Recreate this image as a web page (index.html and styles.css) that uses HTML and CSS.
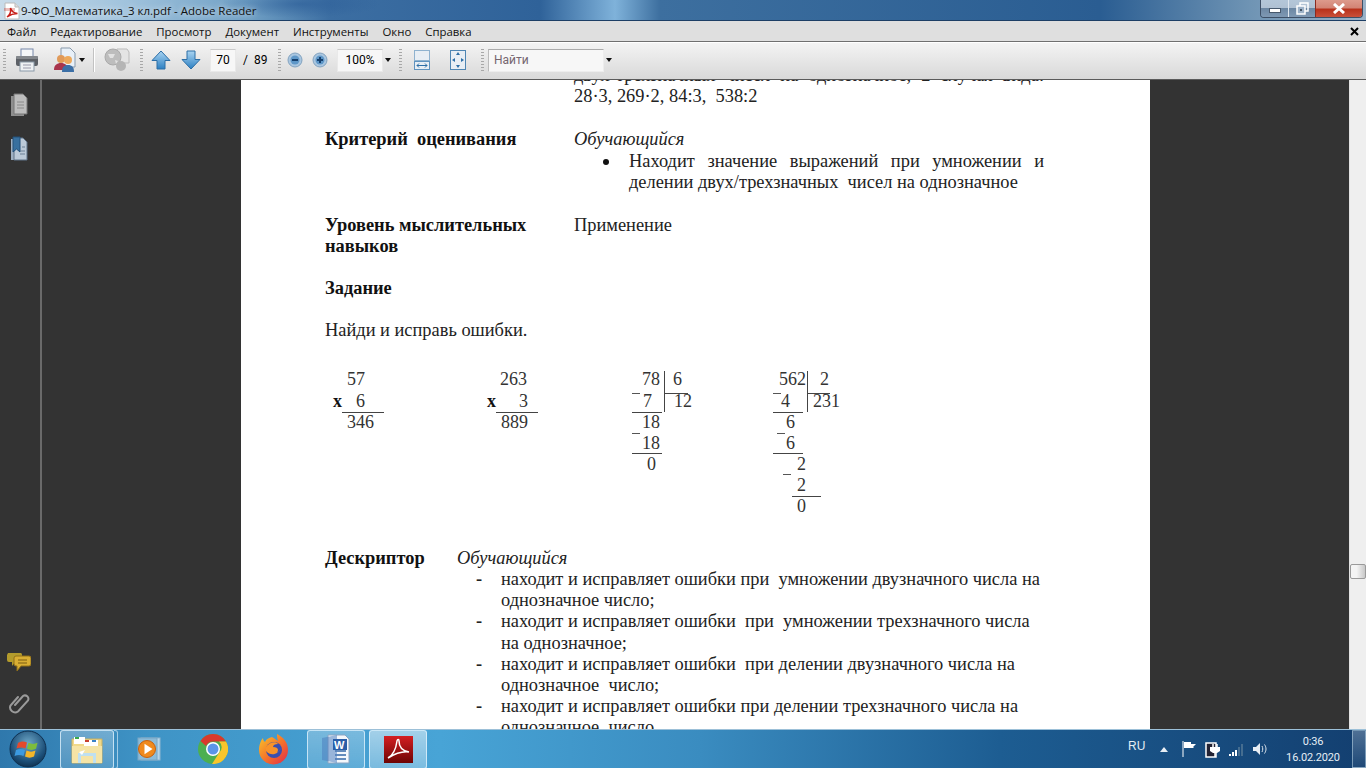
FILE: index.html
```html
<!DOCTYPE html>
<html lang="ru">
<head>
<meta charset="utf-8">
<title>9-ФО_Математика_3 кл.pdf - Adobe Reader</title>
<link rel="stylesheet" href="styles.css">
</head>
<body>
<div class="app">
  <header class="titlebar">
    <svg class="pdf-mini" viewBox="0 0 16 18" width="16" height="18"><path d="M1 1h10l4 4v12H1z" fill="#fff" stroke="#bbb"/><path d="M11 1v4h4" fill="#ddd" stroke="#bbb"/><rect x="0" y="6" width="11" height="3" fill="#c8281e" opacity=".3"/><path d="M3 15c3-2 4-6 3.500-9 1 3 3 5 7 5.500-4 0-7 1-10.500 3.500z" fill="none" stroke="#c8201a" stroke-width="1.500"/></svg>
    <span class="title-text">9-ФО_Математика_3 кл.pdf - Adobe Reader</span>
    <div class="caption">
      <div class="cap cap-min"><span class="min-glyph"></span></div>
      <div class="cap cap-max"><svg viewBox="0 0 13 13" width="13" height="13"><rect x="4" y="1" width="8" height="8" fill="none" stroke="#fff" stroke-width="1.500"/><rect x="1" y="4" width="8" height="8" fill="#9db2c8" stroke="#fff" stroke-width="1.500"/><rect x="4" y="7" width="2" height="2" fill="#456"/></svg></div>
      <div class="cap cap-close"><svg viewBox="0 0 14 11" width="14" height="11"><path d="M2 1l10 9M12 1L2 10" stroke="#fff" stroke-width="3"/></svg></div>
    </div>
  </header>
  <nav class="menubar">
    <span>Файл</span><span>Редактирование</span><span>Просмотр</span><span>Документ</span><span>Инструменты</span><span>Окно</span><span>Справка</span>
    <svg class="menu-x" viewBox="0 0 9 9" width="9" height="9"><path d="M1 1l7 7M8 1L1 8" stroke="#000" stroke-width="2"/></svg>
  </nav>
  <div class="toolbar">
    <i class="grip"></i>
    <svg class="ti ti-print" viewBox="0 0 24 24" width="24" height="24"><rect x="6" y="1" width="12" height="8" fill="#f4f6f8" stroke="#78a"/><rect x="1" y="8" width="22" height="10" rx="2" fill="#5c6066"/><rect x="1" y="8" width="22" height="3" rx="1" fill="#83878c"/><rect x="5" y="14" width="14" height="9" fill="#eef1f3" stroke="#8a99a8"/><path d="M8 17h8M8 20h8" stroke="#99a"/></svg>
    <svg class="ti ti-share" viewBox="0 0 24 26" width="24" height="26"><path d="M9 1h9l5 5v14H9z" fill="#e8f0f8" stroke="#89a"/><circle cx="9" cy="12" r="4" fill="#e09a5a"/><path d="M2 23c0-5 3-7 7-7s7 2 7 7z" fill="#a8344c"/><circle cx="16" cy="13" r="4" fill="#eda95c"/><path d="M10 25c0-5 2-7 6-7s6 2 6 7z" fill="#3b6fa6"/></svg>
    <i class="caret c-share"></i>
    <i class="sep"></i>
    <svg class="ti ti-gray" viewBox="0 0 28 26" width="28" height="26"><path d="M14 2h10l2 3v11H14z" fill="#e4e4e4" stroke="#bbb"/><circle cx="10" cy="10" r="8" fill="#bdbdbd" stroke="#aaa"/><path d="M5 7h7l-2 4H7zM12 13l3 1-2 3z" fill="#e2e2e2"/><circle cx="18" cy="19" r="5" fill="#b5b5b5"/></svg>
    <i class="grip g-nav"></i>
    <svg class="ti ti-up" viewBox="0 0 20 20" width="20" height="20"><defs><linearGradient id="gb" x1="0" y1="0" x2="0" y2="1"><stop offset="0" stop-color="#a9d4f2"/><stop offset="1" stop-color="#2d80c2"/></linearGradient></defs><path d="M10 1l9 9.500h-5V19H6v-8.500H1z" fill="url(#gb)" stroke="#2c6ea6"/></svg>
    <svg class="ti ti-down" viewBox="0 0 20 20" width="20" height="20"><path d="M10 19l9-9.500h-5V1H6v8.500H1z" fill="url(#gb)" stroke="#2c6ea6"/></svg>
    <div class="field f-page">70</div>
    <span class="pg">/&nbsp; 89</span>
    <i class="grip g-zoom"></i>
    <svg class="ti ti-zo" viewBox="0 0 16 16" width="16" height="16"><circle cx="8" cy="8" r="7" fill="#a9c6e0" stroke="#83a3c0"/><circle cx="8" cy="8" r="4.500" fill="#5e97c8"/><path d="M5 8h6" stroke="#16406e" stroke-width="2"/></svg>
    <svg class="ti ti-zi" viewBox="0 0 16 16" width="16" height="16"><circle cx="8" cy="8" r="7" fill="#a9c6e0" stroke="#83a3c0"/><circle cx="8" cy="8" r="4.500" fill="#5e97c8"/><path d="M5 8h6M8 5v6" stroke="#16406e" stroke-width="2"/></svg>
    <div class="field f-zoom">100%</div>
    <i class="caret c-zoom"></i>
    <i class="grip g-fit"></i>
    <svg class="ti ti-fitw" viewBox="0 0 16 20" width="16" height="20"><rect x=".5" y=".5" width="15" height="10" fill="#e8eef4" stroke="#8fb2cf"/><rect x=".5" y="11.500" width="15" height="8" fill="#e8eef4" stroke="#5f93bf"/><path d="M3 15.500h10M3 15.500l2-2M3 15.500l2 2M13 15.500l-2-2M13 15.500l-2 2" stroke="#2c6ea6" fill="none"/></svg>
    <svg class="ti ti-fitp" viewBox="0 0 16 20" width="16" height="20"><rect x=".5" y=".5" width="15" height="19" fill="#e8eef4" stroke="#4f86b3"/><path d="M8 2l2 3H6zM8 18l2-3H6zM2 10l3-2v4zM14 10l-3-2v4z" fill="#2c6ea6"/></svg>
    <i class="grip g-find"></i>
    <div class="field f-find">Найти</div>
    <i class="caret c-find"></i>
  </div>
  <main class="workspace">
    <aside class="sidepanel">
      <div class="side-top">
        <svg viewBox="0 0 18 24" width="18" height="24"><rect x="1" y="3" width="13" height="20" fill="#8e8e8e"/><path d="M4 1h9l4 4v16H4z" fill="#bdbdbd" stroke="#777"/><path d="M7 9h7M7 12h7M7 15h7" stroke="#8a8a8a"/></svg>
        <svg viewBox="0 0 18 26" width="18" height="26"><rect x="1" y="3" width="13" height="21" fill="#9fb0c2"/><path d="M4 2h9l4 4v18H4z" fill="#bccad8" stroke="#5f7287"/><path d="M3 1h7v15l-3.500-3L3 16z" fill="#38709f" stroke="#23507a"/><path d="M12 11h3M10 15h5M10 18h5" stroke="#6d8196"/></svg>
      </div>
      <div class="side-bottom">
        <svg viewBox="0 0 24 20" width="24" height="20"><path d="M1 1h13a2 2 0 0 1 1 2v5a2 2 0 0 1-2 2H8l-3 4v-4H2a2 2 0 0 1-2-2V3z" fill="#b39b2c"/><path d="M9 4h13a2 2 0 0 1 2 2v6a2 2 0 0 1-2 2h-8l-4 5v-5H9a2 2 0 0 1-2-2V6a2 2 0 0 1 2-2z" fill="#d9ae33" stroke="#8f6f18"/><path d="M11 8h9M11 11h9" stroke="#7a5d12"/></svg>
        <svg viewBox="0 0 22 24" width="22" height="24"><path d="M7 13l8-9a3.500 3.500 0 0 1 5 4.500l-10 11a5 5 0 0 1-7.500-6L10 5" fill="none" stroke="#9a9a9a" stroke-width="2" stroke-linecap="round"/></svg>
      </div>
    </aside>
    <div class="canvas">
      <article class="page">
        <div class="doc">
          <div class="row r-intro">
            <div></div>
            <div>
              <p class="just">двух-трехзначных чисел на однозначное, 2 случая вида:</p>
              <p>28·3, 269·2, 84:3, &nbsp;538:2</p>
            </div>
          </div>
          <div class="row r-crit">
            <b>Критерий&nbsp; оценивания</b>
            <div>
              <p><em>Обучающийся</em></p>
              <ul class="bullets">
                <li>Находит значение выражений при умножении и делении двух/трехзначных&nbsp; чисел на однозначное</li>
              </ul>
            </div>
          </div>
          <div class="row r-level">
            <b>Уровень мыслительных<br>навыков</b>
            <p>Применение</p>
          </div>
          <p class="block r-task"><b>Задание</b></p>
          <p class="block r-find">Найди и исправь ошибки.</p>
          <svg class="math" width="719" height="180" viewBox="0 0 719 180">
            <text x="22" y="17">57</text>
            <text class="bold" x="8" y="39">x</text>
            <text x="31" y="39">6</text>
            <line x1="17" y1="44" x2="59" y2="44"/>
            <text x="22" y="60">346</text>

            <text x="175" y="17">263</text>
            <text class="bold" x="162" y="39">x</text>
            <text x="194" y="39">3</text>
            <line x1="171" y1="44" x2="213" y2="44"/>
            <text x="176" y="60">889</text>

            <text x="317" y="17">78</text>
            <text x="348" y="17">6</text>
            <line x1="339" y1="3" x2="339" y2="44"/>
            <line x1="339" y1="25" x2="363" y2="25"/>
            <line class="minus" x1="307" y1="25" x2="315" y2="25"/>
            <text x="318" y="39">7</text>
            <text x="349" y="39">12</text>
            <line x1="307" y1="44" x2="337" y2="44"/>
            <text x="317" y="60">18</text>
            <line class="minus" x1="307" y1="65" x2="315" y2="65"/>
            <text x="317" y="81">18</text>
            <line x1="307" y1="85" x2="337" y2="85"/>
            <text x="322" y="102">0</text>

            <text x="454" y="17">562</text>
            <text x="495" y="17">2</text>
            <line x1="482" y1="3" x2="482" y2="44"/>
            <line x1="482" y1="25" x2="505" y2="25"/>
            <line class="minus" x1="448" y1="25" x2="456" y2="25"/>
            <text x="456" y="39">4</text>
            <text x="488" y="39">231</text>
            <line x1="448" y1="44" x2="478" y2="44"/>
            <text x="461" y="60">6</text>
            <line class="minus" x1="452" y1="65" x2="460" y2="65"/>
            <text x="461" y="81">6</text>
            <line x1="448" y1="85" x2="478" y2="85"/>
            <text x="472" y="102">2</text>
            <line class="minus" x1="458" y1="106" x2="466" y2="106"/>
            <text x="472" y="123">2</text>
            <line x1="467" y1="128" x2="496" y2="128"/>
            <text x="472" y="144">0</text>
          </svg>
          <div class="descr">
            <b>Дескриптор</b>
            <p><em>Обучающийся</em></p>
          </div>
          <ul class="dashes">
            <li>находит и исправляет ошибки при&nbsp; умножении двузначного числа на однозначное число;</li>
            <li>находит и исправляет ошибки&nbsp; при&nbsp; умножении трехзначного числа на однозначное;</li>
            <li>находит и исправляет ошибки&nbsp; при делении двузначного числа на однозначное&nbsp; число;</li>
            <li>находит и исправляет ошибки при делении трехзначного числа на однозначное&nbsp; число.</li>
          </ul>
        </div>
      </article>
      <div class="scrollbar"><div class="thumb"></div></div>
    </div>
  </main>
  <footer class="taskbar">
    <div class="start"><svg viewBox="0 0 38 38" width="38" height="38"><defs><radialGradient id="orb" cx=".5" cy=".35" r=".7"><stop offset="0" stop-color="#6fa8c8"/><stop offset=".7" stop-color="#1c4f78"/><stop offset="1" stop-color="#0c2c48"/></radialGradient></defs><circle cx="19" cy="19" r="18" fill="url(#orb)" stroke="#0f3050"/><path d="M9 13c3-2 6-2 9-.5l-1.500 6c-3-1.500-6-1.500-9 0z" fill="#e5492c"/><path d="M19.500 12.800c3 1.500 6 1.500 9 0l-1.500 6c-3 1.500-6 1.500-9 0z" fill="#7dbd3c"/><path d="M7 20c3-1.500 6-1.500 9 0l-1.500 6c-3-1.500-6-1.500-9 0z" fill="#3c9ae0"/><path d="M17.500 20.500c3 1.500 6 1.500 9 0l-1.500 6c-3 1.500-6 1.500-9 0z" fill="#f5b62a"/></svg></div>
    <div class="task active t-ex"><svg viewBox="0 0 32 30" width="32" height="30"><path d="M1 5h30v24H1z" fill="#f0d98a" stroke="#c9b060"/><rect x="3" y="3" width="11" height="7" fill="#fff"/><rect x="4" y="3" width="4" height="2" fill="#3aa84a"/><rect x="13" y="6" width="14" height="6" fill="#fff"/><rect x="14" y="6" width="4" height="2" fill="#c8402e"/><rect x="21" y="6" width="4" height="2" fill="#3a82c8"/><path d="M1 12h30v17H1z" fill="#f5e4a6"/><path d="M7 19h18v10h-3v-7H10v7H7z" fill="#bfe0f0"/><path d="M8 18l6-2-3 5z" fill="#fff"/></svg></div>
    <i class="ex-edge"></i>
    <div class="task t-wmp"><svg viewBox="0 0 26 26" width="26" height="26"><rect x="6" y="2" width="19" height="22" fill="#b7d6ea" stroke="#8fb6d0"/><rect x="3" y="2" width="19" height="22" fill="#8cbbd8" stroke="#79a6c4"/><circle cx="12" cy="13" r="8.500" fill="#f08a1d" stroke="#c8610c"/><path d="M9.500 7.800l8 5.200-8 5.200z" fill="#fff"/></svg></div>
    <div class="task t-chrome"><svg viewBox="0 0 30 30" width="30" height="30"><circle cx="15" cy="15" r="15" fill="#4caf50"/><path d="M15 0a15 15 0 0 1 13 7.500H15a7.500 7.500 0 0 0-7 4.500L2.500 7A15 15 0 0 1 15 0z" fill="#d8392c"/><path d="M28 7.500A15 15 0 0 1 14 30l7-11a7.500 7.500 0 0 0 0-11.500z" fill="#f8c52c"/><circle cx="15" cy="15" r="7" fill="#fff"/><circle cx="15" cy="15" r="5.500" fill="#5a95e8"/></svg></div>
    <div class="task t-ff"><svg viewBox="0 0 30 32" width="30" height="32"><defs><linearGradient id="ffg" x1="0" y1="0" x2="1" y2="1"><stop offset="0" stop-color="#f9c92a"/><stop offset=".5" stop-color="#f5762a"/><stop offset="1" stop-color="#e0284c"/></linearGradient></defs><path d="M18 1c6 3 11 8 11 16a14.500 14.500 0 0 1-29 0C0 12 2 7 4 5c0 2 1 3 2 4 1-3 4-4 7-5 2 1 6 4 6 4-1-3-1-5-1-7z" fill="url(#ffg)"/><circle cx="15" cy="17" r="8" fill="#3a4fb0"/><path d="M7 14c3-5 10-6 12-3-3 0-5 1-5 3 3 0 5 1 5 3 0 3-4 5-7 3 3 1 8 0 10-5-2 6-10 9-15 3z" fill="#f8932a"/></svg></div>
    <div class="task active t-word"><svg viewBox="0 0 30 30" width="30" height="30"><path d="M7 1h17l4 4v24H7z" fill="#f4f7fb" stroke="#8ba4c2"/><path d="M14 9h11M14 13h11M14 17h11M14 21h11M14 25h11" stroke="#3568a8" stroke-width="1.500"/><path d="M1 4l15-3v28L1 26z" fill="#4f7fc0" opacity=".55"/><rect x="12" y="5" width="14" height="11" fill="#2a5ea8"/><text class="w-letter" x="13" y="15">W</text></svg></div>
    <div class="task active t-pdf"><svg viewBox="0 0 29 27" width="29" height="27"><defs><linearGradient id="pdfg" x1="0" y1="0" x2="0" y2="1"><stop offset="0" stop-color="#d41f22"/><stop offset="1" stop-color="#6d0404"/></linearGradient></defs><rect width="29" height="27" fill="url(#pdfg)"/><path d="M4 22c5-3 8-9 9-17 .5-2 2-2 2 0 0 6 4 10 10 11-7-1-13 1-21 6z" fill="none" stroke="#fff" stroke-width="1.500"/></svg></div>
    <div class="tray">
      <span class="lang">RU</span>
      <svg class="tr-up" viewBox="0 0 8 5" width="8" height="5"><path d="M4 0l4 5H0z" fill="#e8eef4"/></svg>
      <svg class="tr-flag" viewBox="0 0 16 18" width="16" height="18"><path d="M2 1v16" stroke="#fff"/><path d="M3 2h7v2h5l-3 3 1 1H3z" fill="#fff"/></svg>
      <svg class="tr-pow" viewBox="0 0 16 17" width="16" height="17"><rect x="1" y="2" width="10" height="14" fill="#223" stroke="#fff" stroke-width="1.500"/><path d="M5 6h10v4l-3 2H8L5 10z" fill="#fff"/><path d="M8 3v3M12 3v3M10 12v4" stroke="#fff" stroke-width="1.500"/></svg>
      <svg class="tr-net" viewBox="0 0 16 15" width="16" height="15"><path d="M1 12h2v2H1z" fill="#fff"/><path d="M4 10h2v4H4zM7 8h2v6H7z" fill="#fff"/><path d="M10 5h2v9h-2zM13 2h2v12h-2z" fill="#456d90"/></svg>
      <svg class="tr-vol" viewBox="0 0 16 14" width="16" height="14"><path d="M1 5h3l4-4v12L4 9H1z" fill="#e8eef4"/><path d="M10 4c1 2 1 4 0 6M12.500 2.500c2 3 2 6 0 9" stroke="#dde6ee" fill="none"/></svg>
      <div class="clock"><div>0:36</div><div>16.02.2020</div></div>
      <div class="showdesk"></div>
    </div>
  </footer>
</div>
</body>
</html>
```
FILE: styles.css
```css
* { box-sizing: border-box; }
html, body { margin: 0; height: 100%; overflow: hidden; }
p { margin: 0; }
ul { margin: 0; padding: 0; list-style: none; }
.app {
  width: 1366px; height: 768px; display: flex; flex-direction: column;
  font-family: "Liberation Sans", Arial, sans-serif; font-size: 12px; color: #000;
}
.titlebar {
  height: 21px; flex: none; display: flex; align-items: center; padding-left: 4px; position: relative;
  border-bottom: 1px solid #1d3f66;
  background:
    radial-gradient(80px 14px at 300px 4px, rgba(40,90,150,.6), transparent),
    linear-gradient(90deg, #c9dcea 0, #9fc2dc 130px, #6f9fc4 250px, #3c6ea2 330px, #2f6299 540px, #7fb2da 615px, #3d6f9f 660px, #2a5d92 1100px, #6f94b4 1250px, #9ab2c8 1366px);
}
.pdf-mini { flex: none; margin-top: 2px; }
.title-text { margin-left: 1px; font-family: "Open Sans", "Noto Sans", sans-serif; font-size: 11.500px; color: #111; white-space: nowrap; text-shadow: 0 0 6px rgba(255,255,255,.9); }
.caption { margin-left: auto; margin-right: 3px; height: 18px; display: flex; align-self: flex-start; border: 1px solid #3d4f66; border-top: 0; border-radius: 0 0 4px 4px; overflow: hidden; }
.cap { display: flex; align-items: center; justify-content: center; height: 100%; }
.cap-min { width: 28px; background: linear-gradient(#b4c6d8 0, #b0c1d3 45%, #6c87a3 50%, #7f99b4 100%); border-right: 1px solid #e0e8f0; }
.cap-max { width: 27px; background: linear-gradient(#b4c6d8 0, #b0c1d3 45%, #6c87a3 50%, #7f99b4 100%); border-right: 1px solid #8a2a20; }
.cap-close { width: 46px; background: linear-gradient(#dd9a8c 0, #d38475 45%, #b8321c 55%, #c9503a 100%); }
.min-glyph { width: 12px; height: 5px; margin-top: 4px; background: #fff; border: 1px solid #47586c; }
.menubar {
  height: 21px; flex: none; display: flex; align-items: center; background: #dfdfdf; padding-left: 7px; gap: 14px;
  font-family: "Open Sans", "Noto Sans", sans-serif; font-size: 11.400px; color: #111; position: relative;
  border-bottom: 1px solid #6f6f6f;
}
.menu-x { margin-left: auto; margin-right: 7px; }
.toolbar {
  height: 38px; flex: none; display: flex; align-items: center; position: relative; padding-bottom: 2px;
  background: linear-gradient(#f3f3f3, #d9d9d9); border-bottom: 1px solid #5b5b5b; border-top: 1px solid #fff;
  font-family: Roboto, "Open Sans", sans-serif; font-size: 12px;
}
.grip { flex: none; width: 3px; height: 22px; background: repeating-linear-gradient(#a8a8a8 0 1px, transparent 1px 3px); }
.sep { flex: none; width: 1px; height: 24px; background: #c2c2c2; box-shadow: 1px 0 0 #fff; margin-left: 8px; }
.caret { flex: none; width: 0; height: 0; border: 3.500px solid transparent; border-top: 4px solid #111; border-bottom: 0; }
.ti { flex: none; }
.toolbar > .grip:first-child { margin-left: 3px; }
.ti-print { margin-left: 9px; }
.ti-share { margin-left: 13px; }
.c-share { margin-left: 3px; }
.ti-gray { margin-left: 9px; }
.g-nav { margin-left: 9px; }
.ti-up { margin-left: 8px; }
.ti-down { margin-left: 10px; }
.field { flex: none; height: 23px; background: #f7f7f7; border: 1px solid #e9e9e9; border-top-color: #c9c9c9; display: flex; align-items: center; justify-content: center; }
.f-page { margin-left: 9px; width: 26px; }
.pg { margin-left: 7px; width: 32px; white-space: nowrap; }
.g-zoom { margin-left: 3px; }
.ti-zo { margin-left: 6px; }
.ti-zi { margin-left: 9px; }
.f-zoom { margin-left: 9px; width: 46px; }
.c-zoom { margin-left: 2px; }
.g-fit { margin-left: 8px; }
.ti-fitw { margin-left: 12px; }
.ti-fitp { margin-left: 20px; }
.g-find { margin-left: 15px; }
.f-find { margin-left: 4px; width: 116px; justify-content: flex-start; padding-left: 5px; color: #75666f; border-color: #ededed; border-top-color: #aaa; border-left-color: #bbb; }
.c-find { margin-left: 2px; }
.workspace { flex: 1; min-height: 0; display: flex; background: #333; }
.sidepanel { width: 42px; flex: none; display: flex; flex-direction: column; justify-content: space-between; border-right: 2px solid #6a6a6a; background: #333; }
.side-top { display: flex; flex-direction: column; align-items: center; gap: 19px; padding: 13px 2px 0 0; }
.side-bottom { display: flex; flex-direction: column; align-items: center; gap: 20px; padding: 0 2px 13px 0; }
.canvas { flex: 1; display: flex; min-width: 0; overflow: hidden; }
.page { margin-left: 199px; width: 909px; height: 100%; flex: none; background: #fff; overflow: hidden; }
.scrollbar { margin-left: auto; width: 17px; background: #efefef; position: relative; border-left: 1px solid #e2e2e2; }
.thumb { position: absolute; left: 0; top: 484px; width: 16px; height: 15px; border: 1px solid #9a9a9a; border-radius: 2px; background: linear-gradient(90deg, #f4f4f4 40%, #c8c8c8); }
.doc {
  margin-top: -15px; padding: 0 106px 0 84px;
  font-family: "Liberation Serif", "Times New Roman", serif; font-size: 18.400px; line-height: 21.200px; color: #222;
}
.doc b { color: #111; }
.row { display: grid; grid-template-columns: 249px 1fr; }
.just { text-align: justify; text-align-last: justify; }
.r-crit { margin-top: 22px; }
.r-level { margin-top: 22px; }
.r-level b { display: block; }
.bullets li { position: relative; padding-left: 55px; text-align: justify; }
.bullets li::before { content: ""; position: absolute; left: 29px; top: 8px; width: 6px; height: 6px; border-radius: 50%; background: #111; }
.block { margin: 0; }
.r-task { margin-top: 21px; }
.r-find { margin-top: 20px; }
.math { display: block; margin-top: 27px; overflow: visible; }
.math text { font-family: "Liberation Serif", "Times New Roman", serif; font-size: 18px; fill: #333; }
.math text.bold { font-weight: bold; fill: #111; }
.math line { stroke: #444; stroke-width: 1; shape-rendering: crispEdges; }
.math line.minus { stroke: #555; }
.descr { display: flex; }
.descr b { width: 132px; flex: none; }
.dashes li { position: relative; padding-left: 176px; }
.dashes li::before { content: "-"; position: absolute; left: 151px; font-weight: bold; }
.taskbar {
  height: 39px; flex: none; display: flex; align-items: center; position: relative;
  border-top: 1px solid #9cc0d8;
  background: linear-gradient(90deg, #2f78ac 0, #3f94c6 150px, #48a4d6 440px, #3a8cc0 700px, #1d5d92 1000px, #133f70 1366px);
  overflow: hidden;
}
.start { width: 56px; flex: none; display: flex; justify-content: center; margin-right: 4px; }
.task { flex: none; height: 39px; display: flex; align-items: center; justify-content: center; }
.task.active { border: 1px solid rgba(230,245,255,.75); border-radius: 3px; background: linear-gradient(rgba(255,255,255,.28), rgba(255,255,255,.14)); }
.t-ex { width: 54px; }
.ex-edge { flex: none; width: 4px; height: 39px; border: 1px solid rgba(230,245,255,.6); border-left: 0; border-radius: 0 3px 3px 0; }
.t-wmp { width: 60px; }
.t-chrome { width: 70px; }
.t-ff { width: 52px; }
.t-word { width: 58px; margin-left: 7px; }
.t-pdf { width: 58px; margin-left: 4px; background: linear-gradient(rgba(255,255,255,.5), rgba(255,255,255,.28)) !important; }
.w-letter { font-family: "Liberation Sans", sans-serif; font-size: 11px; font-weight: bold; fill: #fff; }
.tray { margin-left: auto; display: flex; align-items: center; height: 100%; color: #e6eef5; }
.lang { font-size: 12px; margin-right: 16px; margin-top: -6px; width: 16px; }
.tr-up { margin-right: 13px; }
.tr-flag { margin-right: 8px; }
.tr-pow { margin-right: 7px; }
.tr-net { margin-right: 8px; }
.tr-vol { margin-right: 18px; }
.clock { width: 54px; white-space: nowrap; text-align: center; font-family: Roboto, "Open Sans", sans-serif; font-size: 11px; letter-spacing: -.15px; line-height: 16px; margin-right: 12px; margin-top: 2px; }
.showdesk { width: 14px; height: 100%; border: 1px solid rgba(200,225,240,.5); background: linear-gradient(rgba(255,255,255,.25), rgba(255,255,255,.05)); }
```
